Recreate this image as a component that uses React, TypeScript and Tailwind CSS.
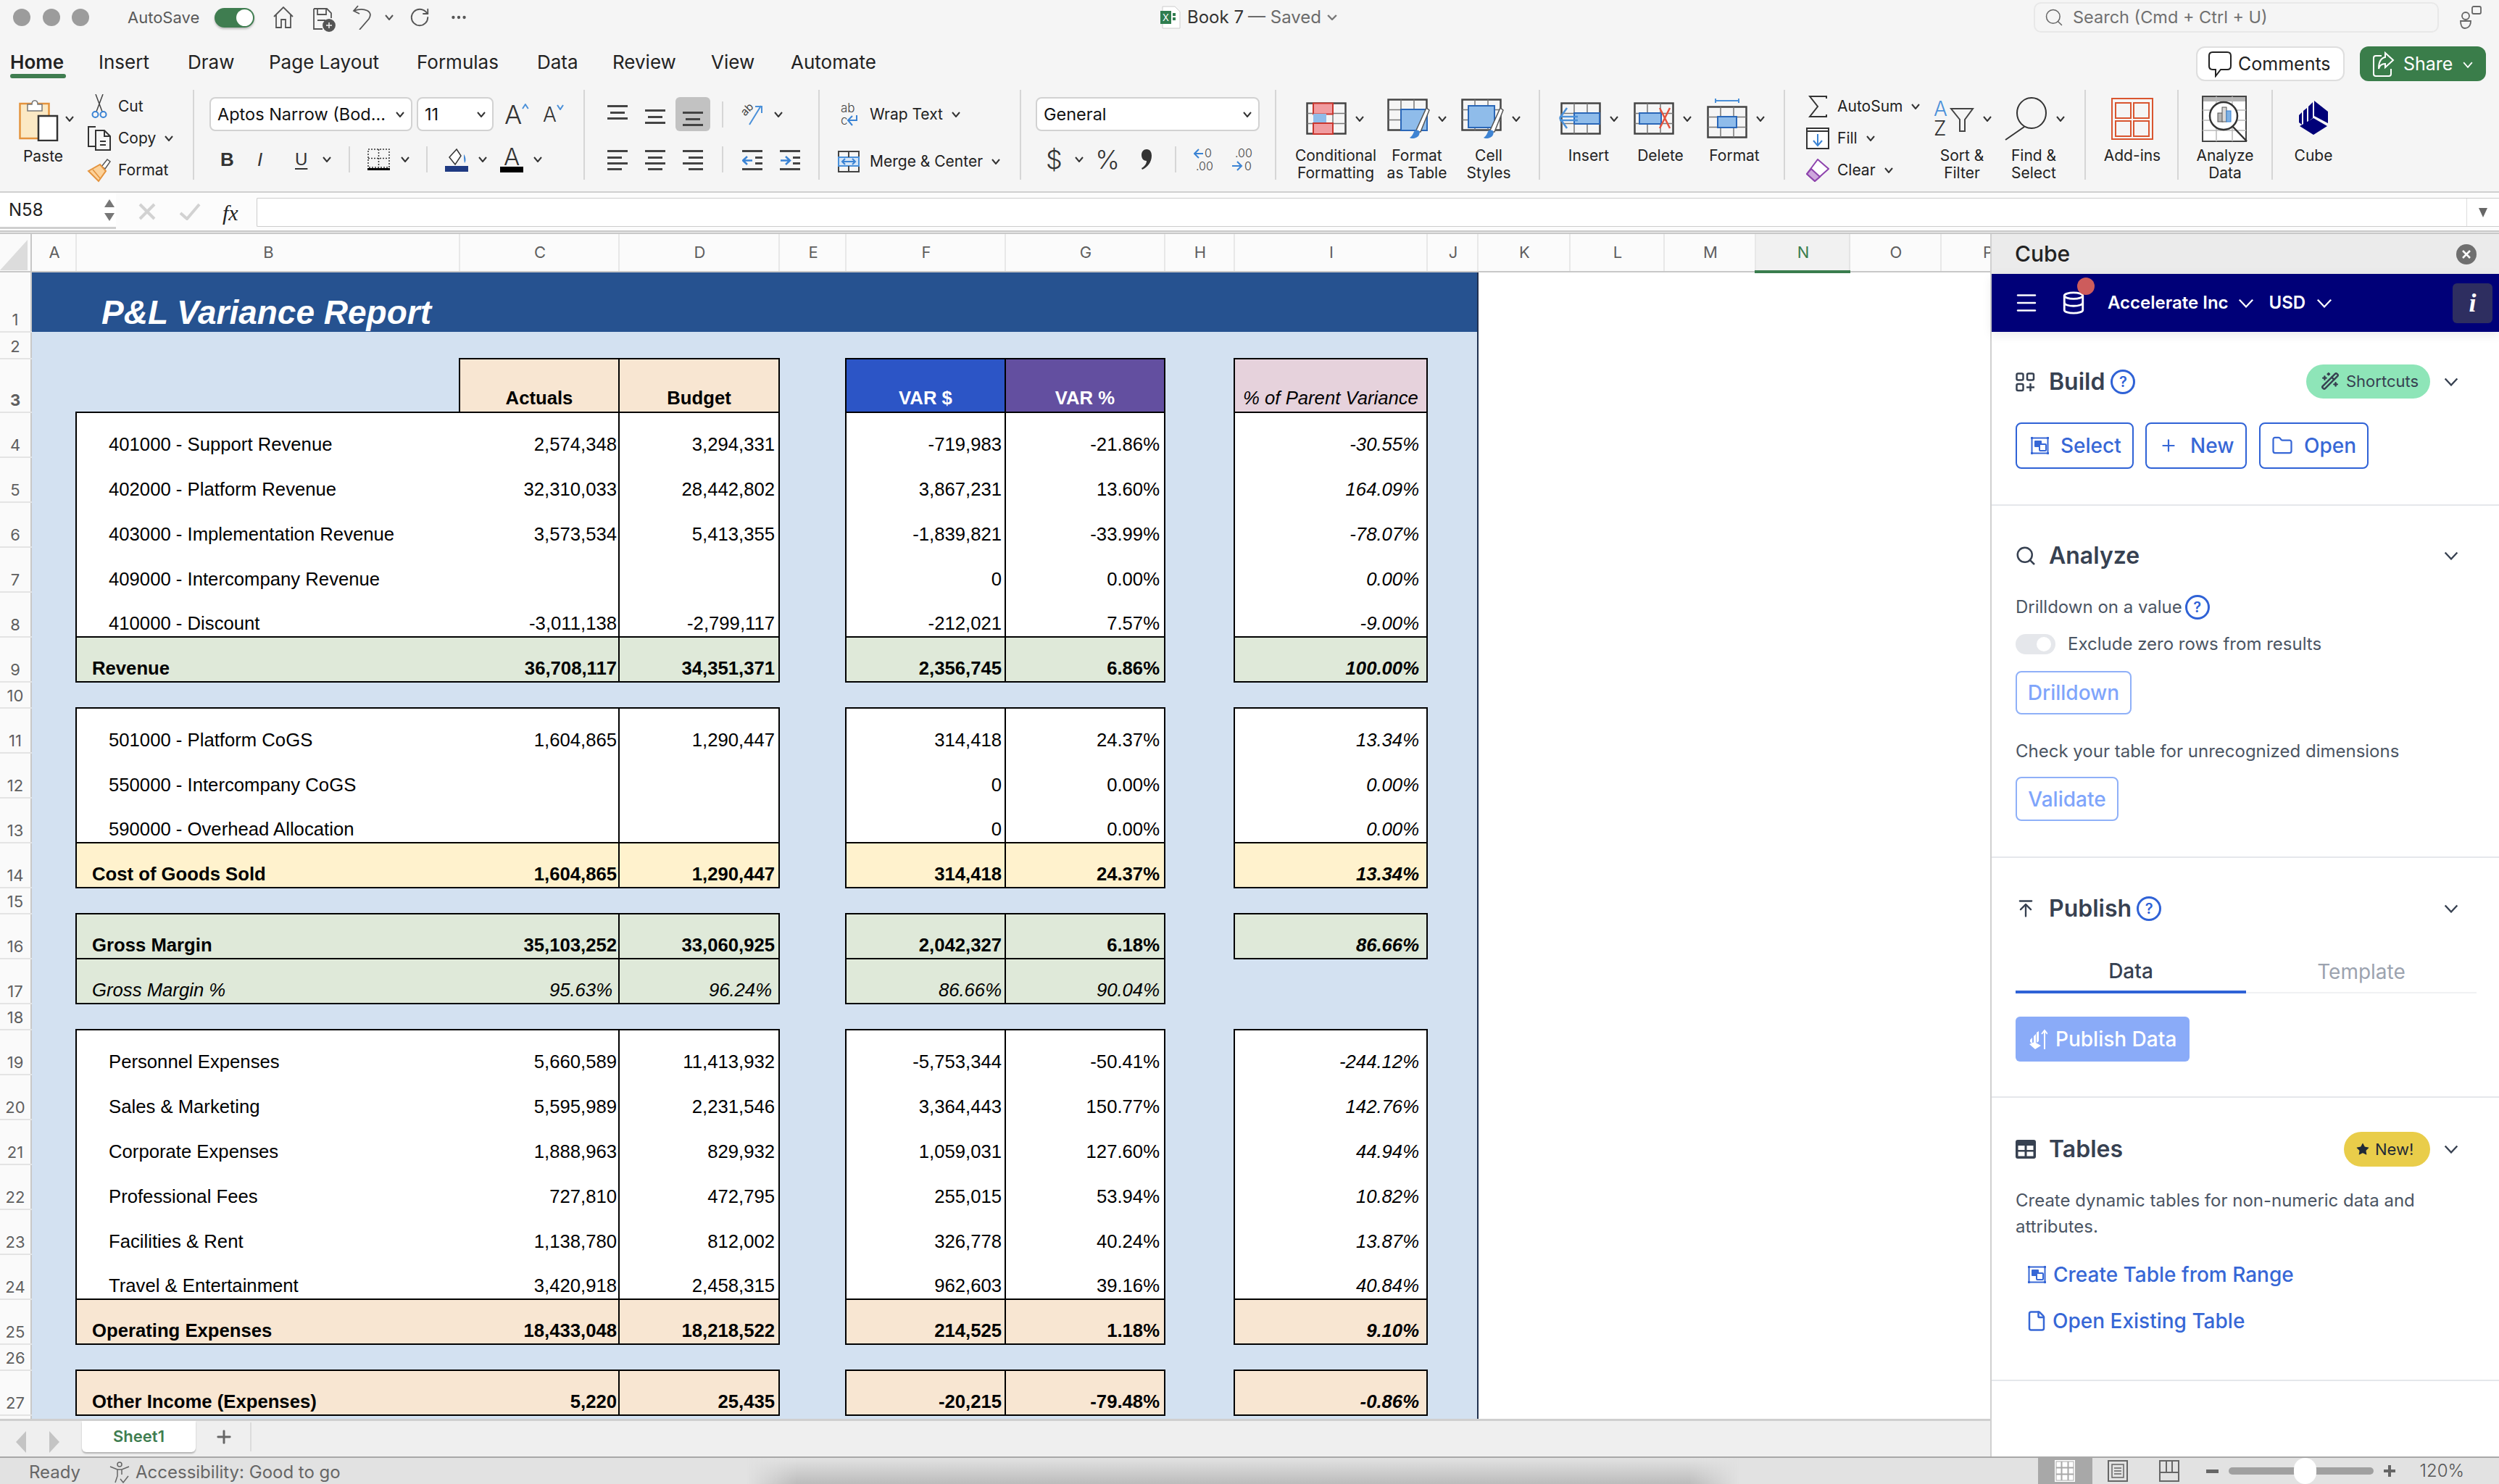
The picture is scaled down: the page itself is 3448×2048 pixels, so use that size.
import React from "react";
import { Search, Plus, Folder, File, ArrowUpToLine, Database, Menu, WandSparkles, Star, RotateCw, MoreHorizontal } from "lucide-react";

const Chev = ({ w = 12, h = 8, c = "#333", sw = 2, cls = "" }: { w?: number; h?: number; c?: string; sw?: number; cls?: string }) => (
  <svg width={w} height={h} viewBox="0 0 12 8" preserveAspectRatio="none" className={`shrink-0 ${cls}`}>
    <path d="M1 1l5 6 5-6" fill="none" stroke={c} strokeWidth={sw} />
  </svg>
);

const Lines = ({ w = 28, h = 36, rows }: { w?: number; h?: number; rows: [number, number, number, string?][] }) => (
  <svg width={w} height={h} viewBox={`0 0 ${w} ${h}`} className="shrink-0">
    {rows.map(([x, y, l, c], i) => (
      <rect key={i} x={x} y={y} width={l} height={3} fill={c || "#444"} />
    ))}
  </svg>
);

const Sep = ({ cls = "" }: { cls?: string }) => <div className={`w-[2px] h-[36px] bg-[#d6d6d6] shrink-0 ${cls}`} />;

const SelectBox = ({ w, label, cls = "" }: { w: string; label: string; cls?: string }) => (
  <div className={`h-[47px] ${w} ${cls} shrink-0 bg-white border-2 border-[#d2d2d2] rounded-[8px] flex items-center pl-[9px] pr-[9px] justify-between text-[23.5px] text-[#111]`}>
    <span className="whitespace-nowrap">{label}</span>
    <Chev />
  </div>
);

const GridBase = ({ children }: { children?: React.ReactNode }) => (
  <svg width="56" height="46" viewBox="0 0 56 46" className="shrink-0 overflow-visible">
    {children}
  </svg>
);
const gridLines = (
  <g fill="none" stroke="#444" strokeWidth="2.5">
    <rect x="1.5" y="1.5" width="53" height="42" />
    <path d="M19 1.5V43.5M37 1.5V43.5M1.5 15.5H54.5M1.5 29.5H54.5" strokeWidth="1.5" stroke="#777" />
  </g>
);
const Brush = () => (
  <g>
    <path d="M58 16 L46 46 L39 46 L54 13Z" fill="#fff" stroke="#555" strokeWidth="1.5" />
    <path d="M38 44 C44 42 46 46 44 50 C42 55 34 56 31 54 C35 52 36 47 38 44Z" fill="#3f84d3" />
  </g>
);

const IconCond = () => (
  <GridBase>
    {gridLines}
    <rect x="10" y="1.5" width="27" height="15" fill="#f19ca0" stroke="#c9362e" strokeWidth="2" />
    <rect x="10" y="16" width="18" height="14" fill="#8fbcea" />
    <rect x="10" y="29" width="27" height="15" fill="#f19ca0" stroke="#c9362e" strokeWidth="2" />
  </GridBase>
);
const IconFmtTable = () => (
  <svg width="62" height="56" viewBox="0 0 62 56" className="shrink-0 overflow-visible">
    {gridLines}
    <rect x="19" y="15" width="36" height="29" fill="#8fbcea" stroke="#2a67b8" strokeWidth="2" />
    <Brush />
  </svg>
);
const IconCellStyles = () => (
  <svg width="62" height="56" viewBox="0 0 62 56" className="shrink-0 overflow-visible">
    {gridLines}
    <rect x="10" y="10" width="36" height="30" fill="#8fbcea" stroke="#2a67b8" strokeWidth="2" />
    <Brush />
  </svg>
);
const IconInsert = () => (
  <GridBase>
    {gridLines}
    <rect x="19" y="15" width="35" height="15" fill="#8fbcea" stroke="#2a67b8" strokeWidth="2" />
    <path d="M-1 22 L9 8 M-1 22 L9 36 M-1 20H24 M-1 25H24" stroke="#4a90d9" strokeWidth="2.5" fill="none" />
  </GridBase>
);
const IconDelete = () => (
  <GridBase>
    {gridLines}
    <rect x="8" y="15" width="30" height="15" fill="#8fbcea" stroke="#2a67b8" strokeWidth="2" />
    <path d="M36 8 L50 36 M50 8 L36 36" stroke="#e4533f" strokeWidth="2.5" />
  </GridBase>
);
const IconFormat = () => (
  <svg width="56" height="56" viewBox="0 -10 56 56" className="shrink-0">
    <path d="M12 -7 H44 M12 -10V-4 M44 -10V-4" stroke="#4a90d9" strokeWidth="2" fill="none" />
    {gridLines}
    <rect x="15" y="15" width="26" height="15" fill="#8fbcea" stroke="#2a67b8" strokeWidth="2" />
  </svg>
);

const Tall = ({ ml = "", w, pl, icon, chev = true, chevMl = "ml-[12px]", lines }: { ml?: string; w: string; pl: string; icon: React.ReactNode; chev?: boolean; chevMl?: string; lines: string[] }) => (
  <div className={`${w} ${ml} shrink-0 flex flex-col`}>
    <div className={`h-[79px] shrink-0 flex items-center ${pl}`}>
      {icon}
      {chev && <Chev cls={chevMl} />}
    </div>
    <div className="shrink-0 text-center text-[21px] leading-[24px] text-[#222]">
      {lines.map((l) => (
        <div key={l} className="whitespace-nowrap">{l}</div>
      ))}
    </div>
  </div>
);

const SmallRow = ({ icon, iconW, label, chevMl = "ml-[12px]", chev = true }: { icon: React.ReactNode; iconW: string; label: string; chevMl?: string; chev?: boolean }) => (
  <div className="h-[44px] shrink-0 flex items-center text-[21px] text-[#222]">
    <div className={`${iconW} shrink-0 flex justify-center pr-[8px]`}>{icon}</div>
    <span className="whitespace-nowrap">{label}</span>
    {chev && <Chev cls={chevMl} />}
  </div>
);

function Ribbon() {
  const group = "h-[124px] border-r-2 border-[#d6d6d6] shrink-0";
  return (
    <div className="h-[154px] pt-[12px] flex border-b-[2px] border-[#d0d0d0] shrink-0">
      {/* Clipboard */}
      <div className={`${group} w-[268px] flex`}>
        <div className="ml-[26px] w-[62px] flex flex-col">
          <svg width="56" height="60" viewBox="0 0 56 60" className="mt-[11px] shrink-0">
            <rect x="1.5" y="8" width="40" height="48" fill="#fbe9c4" stroke="#e4933d" strokeWidth="2.5" />
            <path d="M12 18 V9 H18 C18 2 26 2 26 9 H32 V18Z" fill="#fff" stroke="#777" strokeWidth="1.5" />
            <rect x="27" y="25" width="26" height="34" fill="#fff" stroke="#333" strokeWidth="2.5" />
          </svg>
          <div className="mt-[9px] text-[21px] leading-[24px] text-center text-[#222] pl-[5px]">Paste</div>
        </div>
        <Chev cls="mt-[36px] ml-[2px]" />
        <div className="ml-[16px] pt-[1px] flex flex-col">
          <SmallRow iconW="w-[45px]" chev={false} label="Cut" icon={
            <svg width="22" height="34" viewBox="0 0 22 34">
              <path d="M6 0 L15 24 M16 0 L7 24" stroke="#444" strokeWidth="1.5" fill="none" />
              <circle cx="5.5" cy="28" r="4" fill="none" stroke="#3a83d4" strokeWidth="2" />
              <circle cx="16.5" cy="28" r="4" fill="none" stroke="#3a83d4" strokeWidth="2" />
            </svg>} />
          <SmallRow iconW="w-[45px]" label="Copy" chevMl="ml-[12px]" icon={
            <svg width="34" height="34" viewBox="0 0 34 34" fill="none" stroke="#333" strokeWidth="2">
              <path d="M12 28 H2 V1 H12" />
              <path d="M12 6 H24 L32 14 V33 H12Z" />
              <path d="M24 6 V14 H32 M18 21 H26 M18 26 H26" />
            </svg>} />
          <SmallRow iconW="w-[45px]" chev={false} label="Format" icon={
            <svg width="34" height="34" viewBox="0 0 34 34">
              <path d="M20 12 L28 2 L32 5 L25 15Z" fill="#fff" stroke="#555" strokeWidth="1.5" />
              <path d="M2 18 L18 9 L26 18 L16 32Z" fill="#fcd29a" stroke="#e4933d" strokeWidth="2" />
              <path d="M8 16 L18 28" stroke="#e4933d" strokeWidth="1.5" />
            </svg>} />
        </div>
      </div>

      {/* Font */}
      <div className={`${group} w-[539px] flex flex-col`}>
        <div className="mt-[10px] h-[47px] shrink-0 flex items-center">
          <SelectBox w="w-[280px]" cls="ml-[21px]" label="Aptos Narrow (Bod..." />
          <SelectBox w="w-[106px]" cls="ml-[6px]" label="11" />
          <div className="ml-[15px] w-[34px] flex items-start text-[#333]">
            <span className="text-[36px] leading-[40px] font-light">A</span>
            <svg width="10" height="8" viewBox="0 0 10 8" className="mt-[5px]"><path d="M1 7 L5 1 L9 7" stroke="#4a90d9" strokeWidth="2" fill="none" /></svg>
          </div>
          <div className="ml-[19px] w-[30px] flex items-start text-[#333]">
            <span className="text-[28px] leading-[40px] font-light">A</span>
            <svg width="10" height="8" viewBox="0 0 10 8" className="mt-[6px]"><path d="M1 1 L5 7 L9 1" stroke="#4a90d9" strokeWidth="2" fill="none" /></svg>
          </div>
        </div>
        <div className="mt-[15px] h-[48px] shrink-0 flex items-center text-[#333]">
          <span className="ml-[36px] w-[17px] font-bold text-[26px] font-['Liberation_Sans',sans-serif]">B</span>
          <span className="ml-[34px] w-[12px] italic text-[26px] font-['Liberation_Sans',sans-serif]">I</span>
          <span className="ml-[40px] w-[18px] underline underline-offset-[4px] text-[24px] font-['Liberation_Sans',sans-serif]">U</span>
          <Chev cls="ml-[20px]" />
          <Sep cls="ml-[24px]" />
          <svg width="31" height="30" viewBox="0 0 31 30" className="ml-[24px]">
            <rect x="1" y="1" width="29" height="25" fill="none" stroke="#333" strokeWidth="1.5" strokeDasharray="2 2" />
            <path d="M15.5 1V26M1 13.5H30" stroke="#333" strokeWidth="1.5" strokeDasharray="2 2" />
            <rect x="0" y="27" width="31" height="3" fill="#000" />
          </svg>
          <Chev cls="ml-[15px]" />
          <Sep cls="ml-[23px]" />
          <svg width="32" height="34" viewBox="0 0 32 34" className="ml-[24px]">
            <path d="M6 14 L16 3 L22 12 L14 24Z" fill="#fff" stroke="#333" strokeWidth="1.5" />
            <path d="M26 10 C29 14 29 20 27 22 C26 18 26 14 26 10Z" fill="#3a83d4" />
            <rect x="0" y="26" width="32" height="8" fill="#1f3a82" />
          </svg>
          <Chev cls="ml-[14px]" />
          <div className="ml-[18px] w-[32px] flex flex-col items-center text-[#333]">
            <span className="text-[33px] leading-[27px] font-light">A</span>
            <div className="w-[32px] h-[8px] bg-black" />
          </div>
          <Chev cls="ml-[14px]" />
        </div>
      </div>

      {/* Alignment */}
      <div className={`${group} w-[324px] flex flex-col`}>
        <div className="mt-[10px] h-[47px] shrink-0 flex items-center">
          <div className="ml-[31px]"><Lines rows={[[0, 5, 28], [4, 14, 20], [0, 22, 28]]} /></div>
          <div className="ml-[24px]"><Lines rows={[[0, 11, 28], [4, 20, 20], [0, 28, 28]]} /></div>
          <div className="ml-[14px] w-[48px] h-[47px] bg-[#c2c2c2] rounded-[6px] flex items-center justify-center">
            <Lines rows={[[0, 14, 28], [4, 23, 20], [0, 31, 28]]} />
          </div>
          <Sep cls="ml-[16px]" />
          <div className="ml-[24px] w-[33px] h-[32px] relative">
            <span className="absolute left-[0px] top-[0px] text-[15px] leading-[18px] text-[#444] -rotate-45">ab</span>
            <svg width="33" height="32" viewBox="0 0 33 32" className="absolute inset-0">
              <path d="M12 30 L28 4 M20 5 H29 V14" stroke="#4a90d9" strokeWidth="2" fill="none" />
            </svg>
          </div>
          <Chev cls="ml-[13px]" />
        </div>
        <div className="mt-[15px] h-[48px] shrink-0 flex items-center">
          <div className="ml-[31px]"><Lines rows={[[0, 6, 28], [0, 15, 20], [0, 23, 28], [0, 31, 20]]} h={38} /></div>
          <div className="ml-[24px]"><Lines rows={[[0, 6, 28], [4, 15, 20], [0, 23, 28], [4, 31, 20]]} h={38} /></div>
          <div className="ml-[24px]"><Lines rows={[[0, 6, 28], [8, 15, 20], [0, 23, 28], [8, 31, 20]]} h={38} /></div>
          <Sep cls="ml-[26px]" />
          <svg width="28" height="38" viewBox="0 0 28 38" className="ml-[26px]">
            <path d="M0 7.5H28M18 16.5H28M18 24.5H28M0 32.5H28" stroke="#444" strokeWidth="3" />
            <path d="M14 20.5H2M7 15L1 20.5L7 26" stroke="#3a83d4" strokeWidth="2.5" fill="none" />
          </svg>
          <svg width="28" height="38" viewBox="0 0 28 38" className="ml-[24px]">
            <path d="M0 7.5H28M18 16.5H28M18 24.5H28M0 32.5H28" stroke="#444" strokeWidth="3" />
            <path d="M1 20.5H13M8 15L14 20.5L8 26" stroke="#3a83d4" strokeWidth="2.5" fill="none" />
          </svg>
        </div>
      </div>

      {/* Wrap */}
      <div className={`${group} w-[278px] flex flex-col text-[21px] text-[#222]`}>
        <div className="mt-[10px] h-[48px] shrink-0 flex items-center ml-[25px]">
          <div className="w-[44px] shrink-0">
            <div className="w-[30px] h-[34px] relative text-[#444] font-light text-[17px] leading-[17px]">
              <span className="absolute left-[4px] top-0">ab</span>
              <span className="absolute left-[4px] top-[17px]">c</span>
              <svg width="30" height="34" viewBox="0 0 30 34" className="absolute inset-0">
                <path d="M26 18 V25 H15 M20 19 L14 25 L20 32" stroke="#3a83d4" strokeWidth="2" fill="none" />
              </svg>
            </div>
          </div>
          <span className="whitespace-nowrap">Wrap Text</span>
          <Chev cls="ml-[12px]" />
        </div>
        <div className="mt-[16px] h-[50px] shrink-0 flex items-center ml-[25px]">
          <div className="w-[44px] shrink-0">
            <svg width="30" height="30" viewBox="0 0 30 30">
              <rect x="1" y="1" width="28" height="28" fill="none" stroke="#444" strokeWidth="2" />
              <rect x="1" y="9" width="28" height="12" fill="#d4e5f7" stroke="#4a90d9" strokeWidth="2" />
              <path d="M15 1V9M15 21V29" stroke="#444" strokeWidth="2" />
              <path d="M6 15H24M10 11L6 15L10 19M20 11L24 15L20 19" stroke="#3a83d4" strokeWidth="2" fill="none" />
            </svg>
          </div>
          <span className="whitespace-nowrap">Merge &amp; Center</span>
          <Chev cls="ml-[12px]" />
        </div>
      </div>

      {/* Number */}
      <div className={`${group} w-[352px] flex flex-col`}>
        <div className="mt-[10px] h-[47px] shrink-0 flex items-center">
          <SelectBox w="w-[309px]" cls="ml-[20px]" label="General" />
        </div>
        <div className="mt-[15px] h-[48px] shrink-0 flex items-center text-[#333]">
          <span className="ml-[34px] w-[17px] text-[36px] font-light leading-none">$</span>
          <Chev cls="ml-[23px]" />
          <span className="ml-[14px] w-[38px] text-[36px] font-light leading-none text-center">%</span>
          <svg width="16" height="30" viewBox="0 0 16 30" className="ml-[27px] shrink-0">
            <path d="M8 1 C13 1 15 5 15 10 C15 19 9 26 2 29 L1 27 C5 25 8 21 8 17 C4 17 1 14 1 9 C1 4 4 1 8 1Z" fill="#333" />
          </svg>
          <Sep cls="ml-[31px]" />
          <div className="ml-[24px] w-[31px] h-[36px] relative text-[16px] leading-[18px] font-light text-[#444]">
            <span className="absolute left-[15px] top-0">0</span>
            <span className="absolute left-[3px] top-[18px]">.00</span>
            <svg width="31" height="18" viewBox="0 0 31 18" className="absolute left-0 top-0">
              <path d="M13 10 H2 M7 4 L1 10 L7 16" stroke="#3a83d4" strokeWidth="2" fill="none" />
            </svg>
          </div>
          <div className="ml-[22px] w-[30px] h-[36px] relative text-[16px] leading-[18px] font-light text-[#444]">
            <span className="absolute left-[4px] top-0">.00</span>
            <span className="absolute left-[17px] top-[18px]">0</span>
            <svg width="16" height="18" viewBox="0 0 16 18" className="absolute left-0 top-[18px]">
              <path d="M0 9 H12 M7 3 L13 9 L7 15" stroke="#3a83d4" strokeWidth="2" fill="none" />
            </svg>
          </div>
        </div>
      </div>

      {/* Styles */}
      <div className={`${group} w-[364px] flex`}>
        <Tall ml="ml-[22px]" w="w-[120px]" pl="pl-[19px]" icon={<IconCond />} lines={["Conditional", "Formatting"]} />
        <Tall w="w-[104px]" pl="pl-[11px]" chevMl="ml-[8px]" icon={<IconFmtTable />} lines={["Format", "as Table"]} />
        <Tall w="w-[94px]" pl="pl-[9px]" chevMl="ml-[8px]" icon={<IconCellStyles />} lines={["Cell", "Styles"]} />
      </div>

      {/* Cells */}
      <div className={`${group} w-[338px] flex`}>
        <Tall ml="ml-[15px]" w="w-[104px]" pl="pl-[13px]" icon={<IconInsert />} lines={["Insert"]} />
        <Tall w="w-[94px]" pl="pl-[10px]" icon={<IconDelete />} lines={["Delete"]} />
        <Tall w="w-[110px]" pl="pl-[17px]" icon={<IconFormat />} lines={["Format"]} />
      </div>

      {/* Editing */}
      <div className={`${group} w-[415px] flex`}>
        <div className="ml-[25px] w-[162px] shrink-0 pt-[1px] flex flex-col">
          <SmallRow iconW="w-[47px]" label="AutoSum" chevMl="ml-[12px]" icon={
            <svg width="26" height="30" viewBox="0 0 26 30"><path d="M25 4 V1 H2 L13 15 L2 29 H25 V26" fill="none" stroke="#333" strokeWidth="2" /></svg>} />
          <SmallRow iconW="w-[47px]" label="Fill" icon={
            <svg width="32" height="30" viewBox="0 0 32 30"><rect x="1" y="1" width="30" height="28" fill="#fff" stroke="#333" strokeWidth="2" /><path d="M1 5H31" stroke="#333" strokeWidth="2" /><path d="M16 9V24M10 18L16 25L22 18" stroke="#3a83d4" strokeWidth="2" fill="none" /></svg>} />
          <SmallRow iconW="w-[47px]" label="Clear" icon={
            <svg width="32" height="32" viewBox="0 0 32 32"><path d="M16 1 L31 14 L12 31 L1 21Z" fill="#fff" stroke="#8e44ad" strokeWidth="2" /><path d="M7 14 L19 25 L12 31 L1 21Z" fill="#cda6dc" stroke="#8e44ad" strokeWidth="2" /></svg>} />
        </div>
        <Tall w="w-[114px]" pl="pl-[18px]" chevMl="ml-[12px]" icon={
          <div className="w-[56px] h-[54px] relative shrink-0 font-light text-[28px] leading-[27px]">
            <span className="absolute left-0 top-0 text-[#4a90d9]">A</span>
            <span className="absolute left-0 top-[27px] text-[#333]">Z</span>
            <svg width="56" height="54" viewBox="0 0 56 54" className="absolute inset-0">
              <path d="M24 13 H54 L43 28 V44 H36 V28Z" fill="none" stroke="#444" strokeWidth="2" />
            </svg>
          </div>} lines={["Sort &", "Filter"]} />
        <Tall w="w-[84px]" pl="pl-[2px]" chevMl="ml-[13px]" icon={
          <svg width="58" height="60" viewBox="0 0 58 60" className="shrink-0">
            <ellipse cx="37" cy="22" rx="20" ry="21" fill="none" stroke="#333" strokeWidth="2" />
            <path d="M27 41 L1 59" stroke="#333" strokeWidth="2" />
          </svg>} lines={["Find &", "Select"]} />
      </div>

      {/* Add-ins */}
      <div className={`${group} w-[128px]`}>
        <Tall w="w-[128px]" pl="justify-center" chev={false} icon={
          <svg width="58" height="58" viewBox="0 0 58 58">
            <rect x="1" y="1" width="56" height="56" fill="none" stroke="#d9552f" strokeWidth="2" />
            <rect x="6" y="7" width="21" height="21" fill="none" stroke="#d9552f" strokeWidth="2" />
            <rect x="31" y="7" width="21" height="21" fill="none" stroke="#d9552f" strokeWidth="2" />
            <rect x="6" y="32" width="21" height="21" fill="none" stroke="#d9552f" strokeWidth="2" />
            <rect x="31" y="32" width="21" height="21" fill="none" stroke="#d9552f" strokeWidth="2" />
          </svg>} lines={["Add-ins"]} />
      </div>
      <div className={`${group} w-[130px]`}>
        <Tall w="w-[128px]" pl="justify-center" chev={false} icon={
          <svg width="64" height="64" viewBox="0 0 64 64">
            <rect x="1" y="1" width="60" height="62" fill="#fff" stroke="#444" strokeWidth="2" />
            <rect x="2" y="2" width="58" height="6" fill="#b5b5b5" />
            <path d="M1 20H61M1 34H61M1 48H61M20 1V63M42 1V63" stroke="#bbb" strokeWidth="1.5" />
            <circle cx="30" cy="28" r="19" fill="#fff" stroke="#333" strokeWidth="2.5" />
            <rect x="22" y="24" width="7" height="12" fill="#b5b5b5" stroke="#555" />
            <rect x="28" y="16" width="6" height="20" fill="#d8d8d8" stroke="#555" />
            <rect x="34" y="21" width="6" height="15" fill="#7fb2e5" stroke="#3a83d4" />
            <path d="M42 42 L62 63" stroke="#333" strokeWidth="2.5" />
          </svg>} lines={["Analyze", "Data"]} />
      </div>
      <div className="w-[112px] h-[124px]">
        <Tall w="w-[112px]" pl="justify-center" chev={false} icon={
          <svg width="42" height="47" viewBox="0 0 42 47" className="mt-[-2px]">
            <path d="M1 20 L5 16 V33 L1 30Z M7 14 L12 10 V30 L7 33Z M14 8 L20 2 V24 L14 28Z M22 0 L41 15 V31 L22 21Z M21 24 L40 35 L21 47 L2 35Z" fill="#000078" />
          </svg>} lines={["Cube"]} />
      </div>
    </div>
  );
}

function TitleBar() {
  return (
    <div className="h-[62px] pb-[14px] flex items-center shrink-0">
      <div className="w-[1601px] shrink-0 flex items-center text-[#555]">
        <div className="ml-[18px] w-[24px] h-[24px] rounded-full bg-[#9c9c9c]" />
        <div className="ml-[17px] w-[24px] h-[24px] rounded-full bg-[#9c9c9c]" />
        <div className="ml-[16px] w-[24px] h-[24px] rounded-full bg-[#9c9c9c]" />
        <span className="ml-[53px] w-[120px] text-[22px] text-[#5a5a5a]">AutoSave</span>
        <div className="w-[55px] h-[27px] rounded-full bg-[#3f7d50] flex justify-end items-center pr-[2px] shadow-[0_2px_3px_rgba(0,0,0,0.25)]">
          <div className="w-[23px] h-[23px] rounded-full bg-white" />
        </div>
        <svg width="30" height="30" viewBox="0 0 30 30" className="ml-[25px]" fill="none" stroke="#555" strokeWidth="1.8">
          <path d="M2 14 L15 1 L28 14 M5 11 V29 H12 V18 H18 V29 H25 V11" />
        </svg>
        <svg width="33" height="33" viewBox="0 0 33 33" className="ml-[25px] mt-[6px]" fill="none" stroke="#555" strokeWidth="1.8">
          <path d="M2 1 H20 L26 7 V14 M14 29 H2 V1 M7 1 V9 H19 V1 M7 17 H18" />
          <circle cx="23" cy="24" r="8" fill="#555" />
          <path d="M19 24 H27 M23 20 V28" stroke="#f5f5f5" strokeWidth="1.5" />
        </svg>
        <svg width="28" height="34" viewBox="0 0 28 34" className="ml-[22px]" fill="none" stroke="#555" strokeWidth="1.8">
          <path d="M8 1 L2 8 L10 12 M2 8 C16 3 30 8 23 19 L10 34" />
        </svg>
        <Chev cls="ml-[17px]" c="#555" />
        <RotateCw className="ml-[21px] w-[30px] h-[30px]" strokeWidth={1.5} color="#555" />
        <MoreHorizontal className="ml-[26px] w-[26px] h-[26px]" strokeWidth={2} color="#555" />
      </div>
      <div className="w-[1205px] shrink-0 flex items-center text-[24px]">
        <div className="w-[28px] h-[32px] relative shrink-0">
          <svg width="28" height="32" viewBox="0 0 28 32" className="absolute inset-0">
            <path d="M3 1 H20 L27 8 V31 H3Z" fill="#fff" stroke="#ccc" />
            <rect x="0" y="7" width="15" height="18" fill="#2f7d4f" />
            <path d="M17 10h4v4h-4zM17 16h4v4h-4z" fill="#2f7d4f" />
          </svg>
          <span className="absolute left-[3px] top-[8px] text-[13px] leading-[16px] text-white">X</span>
        </div>
        <span className="ml-[9px] text-[#333]">Book 7</span>
        <span className="ml-[6px] text-[#6b6b6b]">— Saved</span>
        <Chev cls="ml-[8px]" c="#777" w={14} />
      </div>
      <div className="w-[559px] h-[42px] shrink-0 border-2 border-[#e8e8e8] rounded-[10px] flex items-center pl-[12px] text-[#707070] text-[23.5px]">
        <Search className="w-[28px] h-[28px]" strokeWidth={1.3} color="#666" />
        <span className="ml-[12px]">Search (Cmd + Ctrl + U)</span>
      </div>
      <svg width="32" height="32" viewBox="0 0 32 32" className="ml-[28px]" fill="none" stroke="#666" strokeWidth="1.8">
        <rect x="18" y="1" width="12" height="10" rx="2" />
        <circle cx="9" cy="14" r="5" />
        <path d="M2 21 H16 C16 30 10 31 8 31 C4 31 2 27 2 21Z" />
      </svg>
    </div>
  );
}

function TabsRow() {
  const tab = "shrink-0 whitespace-nowrap text-[#222] mb-[3px]";
  return (
    <div className="h-[50px] flex items-center pl-[14px] text-[26px] shrink-0">
      <div className={`${tab} w-[122px] font-semibold relative`}>
        Home
        <div className="absolute left-0 top-[36px] w-[77px] h-[6px] rounded-full bg-[#3f7d50]" />
      </div>
      <div className={`${tab} w-[123px]`}>Insert</div>
      <div className={`${tab} w-[112px]`}>Draw</div>
      <div className={`${tab} w-[204px]`}>Page Layout</div>
      <div className={`${tab} w-[166px]`}>Formulas</div>
      <div className={`${tab} w-[104px]`}>Data</div>
      <div className={`${tab} w-[136px]`}>Review</div>
      <div className={`${tab} w-[110px]`}>View</div>
      <div className={tab}>Automate</div>
      <div className="ml-auto h-[48px] mt-[2px] pt-[2px] w-[205px] bg-white border-2 border-[#dedede] rounded-[12px] flex items-center pl-[15px] gap-[9px] text-[25px] text-[#222]">
        <svg width="32" height="36" viewBox="0 0 32 36" fill="none" stroke="#222" strokeWidth="2">
          <path d="M6 1 H26 C29 1 31 3 31 6 V20 C31 23 29 25 26 25 H17 L10 34 V25 H6 C3 25 1 23 1 20 V6 C1 3 3 1 6 1Z" />
        </svg>
        Comments
      </div>
      <div className="ml-[21px] mr-[18px] h-[48px] mt-[2px] pt-[2px] w-[174px] bg-[#3a7d4a] rounded-[12px] flex items-center pl-[18px] text-[25px] text-white">
        <svg width="30" height="36" viewBox="0 0 30 36" fill="none" stroke="#fff" strokeWidth="2" className="shrink-0">
          <path d="M12 6 H4 C2 6 1 7 1 9 V31 C1 33 2 34 4 34 H22 C24 34 25 33 25 31 V24" />
          <path d="M17 2 L28 12 L17 22 V17 C12 17 9 20 8 24 C8 15 11 9 17 8Z" />
        </svg>
        <span className="ml-[12px]">Share</span>
        <Chev cls="ml-[14px]" c="#fff" w={14} h={9} sw={1.5} />
      </div>
    </div>
  );
}

function FormulaBar() {
  return (
    <div className="h-[52px] flex bg-[#fcfcfc] shrink-0 relative">
      <div className="w-[160px] h-[50px] bg-white border-b-[3px] border-[#cfcfcf] flex items-center pl-[12px] pr-[2px] justify-between text-[24px] text-[#222]">
        N58
        <div className="flex flex-col gap-[8px]">
          <div className="w-0 h-0 border-x-[7px] border-x-transparent border-b-[11px] border-b-[#777]" />
          <div className="w-0 h-0 border-x-[7px] border-x-transparent border-t-[11px] border-t-[#777]" />
        </div>
      </div>
      <svg width="26" height="24" viewBox="0 0 26 24" className="ml-[30px] mt-[14px]"><path d="M3 2 L23 22 M23 2 L3 22" stroke="#d2d2d2" strokeWidth="4" /></svg>
      <svg width="30" height="24" viewBox="0 0 30 24" className="ml-[31px] mt-[14px]"><path d="M2 14 L11 22 L28 2" stroke="#d2d2d2" strokeWidth="4" fill="none" /></svg>
      <span className="ml-[30px] w-[34px] text-[30px] italic font-['Liberation_Serif',serif] text-[#222] mt-[5px]">fx</span>
      <div className="ml-[13px] mt-[7px] w-[3094px] h-[40px] bg-white border border-[#ccc] border-r-0 rounded-l-[2px] flex justify-end">
        <div className="w-[45px] h-full border-l border-[#ddd] flex items-center justify-center">
          <div className="w-0 h-0 border-x-[6px] border-x-transparent border-t-[13px] border-t-[#666]" />
        </div>
      </div>
    </div>
  );
}

/* ---------- spreadsheet ---------- */

const BLUE = "bg-[#d3e1f1]";
const COLS = [43, 62, 529, 220, 221, 92, 220, 220, 96, 266, 70, 127, 130, 126, 130, 126, 128];
const LETTERS = "A B C D E F G H I J K L M N O P".split(" ");

const rowHead = "bg-[#fafafa] border-b-2 border-b-[#e4e4e4] border-r-2 border-r-[#c8c8c8] text-center align-bottom text-[22px] text-[#5f5f5f] font-['Inter',sans-serif] pb-[2px] leading-[28px]";
const cell = "align-bottom whitespace-nowrap pb-[3px] leading-[30px] border-black";
const num = `${cell} text-right`;
const hdr = "border-2 border-black align-bottom text-center pb-[4px] leading-[30px]";

type RowP = {
  n: number;
  label?: string;
  vals?: [string, string, string, string, string];
  fill?: string;
  top?: boolean;
  bottom?: boolean;
  bold?: boolean;
  italic?: boolean;
  noI?: boolean;
};

function DataRow({ n, label, vals = ["", "", "", "", ""], fill = "bg-white", top, bottom, bold, italic, noI }: RowP) {
  const tb = `${top ? "border-t-2" : ""} ${bottom ? "border-b-2" : ""}`;
  const it = italic ? "italic" : "";
  const w = bold ? "font-bold" : "";
  return (
    <tr className="h-[62px]">
      <td className={rowHead}>{n}</td>
      <td className={BLUE} />
      <td className={`${cell} text-left ${bold || italic ? "pl-[21px]" : "pl-[44px]"} border-l-2 ${tb} ${fill} ${w} ${it}`}>{label}</td>
      <td className={`${num} border-r-2 ${italic ? "pr-[8px]" : "pr-[2px]"} ${tb} ${fill} ${w} ${it}`}>{vals[0]}</td>
      <td className={`${num} border-r-2 ${italic ? "pr-[9px]" : "pr-[5px]"} ${tb} ${fill} ${w} ${it}`}>{vals[1]}</td>
      <td className={BLUE} />
      <td className={`${num} border-x-2 pr-[4px] ${tb} ${fill} ${w} ${it}`}>{vals[2]}</td>
      <td className={`${num} border-r-2 pr-[6px] ${tb} ${fill} ${w} ${it}`}>{vals[3]}</td>
      <td className={BLUE} />
      {noI ? (
        <td className={BLUE} />
      ) : (
        <td className={`${num} border-x-2 pr-[10px] italic ${tb} ${fill} ${w}`}>{vals[4]}</td>
      )}
      <td className={`${BLUE} border-r-2 border-r-[#20304f]`} />
      <td colSpan={6} className="bg-white" />
    </tr>
  );
}

function Spacer({ n, h }: { n: number; h: string }) {
  return (
    <tr className={h}>
      <td className={rowHead}>{n}</td>
      <td colSpan={10} className={`${BLUE} border-r-2 border-r-[#20304f]`} />
      <td colSpan={6} className="bg-white" />
    </tr>
  );
}

const GREEN = "bg-[#dfe9d9]";
const YELLOW = "bg-[#fff2cd]";
const PEACH = "bg-[#f8e6d2]";

function Sheet() {
  return (
    <div className="flex-1 overflow-hidden bg-white">
      <table className="border-collapse table-fixed w-[2806px] font-['Liberation_Sans',Arial,sans-serif] text-[25.7px] text-black">
        <colgroup>
          {COLS.map((c, i) => (
            <col key={i} style={{ width: c }} />
          ))}
        </colgroup>
        <tbody>
          <tr className="h-[52px] font-['Inter',sans-serif] text-[22px] text-[#5f5f5f]">
            <td className="bg-[#fafafa] border-b-2 border-b-[#c8c8c8] border-r-2 border-r-[#c8c8c8]">
              <svg width="38" height="44" viewBox="0 0 38 44" className="mt-[4px]"><path d="M38 2 V44 H0Z" fill="#dcdcdc" /></svg>
            </td>
            {LETTERS.map((l) => (
              <td
                key={l}
                className={
                  l === "N"
                    ? "text-center pl-[2px] bg-[#f1f1f1] text-[#3a7d4e] border-b-[4px] border-b-[#3a7d4e] border-r-2 border-r-[#e4e4e4]"
                    : "text-center pl-[2px] bg-[#fbfbfb] border-b-2 border-b-[#c8c8c8] border-r-2 border-r-[#e8e8e8]"
                }
              >
                {l}
              </td>
            ))}
          </tr>
          <tr className="h-[83px]">
            <td className={rowHead}>1</td>
            <td colSpan={10} className="bg-[#265290] border-r-2 border-r-[#20304f] align-bottom pl-[96px] text-[46px] leading-[53px] font-bold italic text-white whitespace-nowrap">
              P&amp;L Variance Report
            </td>
            <td colSpan={6} className="bg-white" />
          </tr>
          <Spacer n={2} h="h-[37px]" />
          <tr className="h-[74px] font-bold">
            <td className={rowHead}>3</td>
            <td colSpan={2} className={BLUE} />
            <td className={`${PEACH} ${hdr}`}>Actuals</td>
            <td className={`${PEACH} ${hdr}`}>Budget</td>
            <td className={BLUE} />
            <td className={`bg-[#2c55c6] text-white ${hdr}`}>VAR $</td>
            <td className={`bg-[#634fa0] text-white ${hdr}`}>VAR %</td>
            <td className={BLUE} />
            <td className={`bg-[#e6d2dc] ${hdr} italic font-normal whitespace-nowrap`}>% of Parent Variance</td>
            <td className={`${BLUE} border-r-2 border-r-[#20304f]`} />
            <td colSpan={6} className="bg-white" />
          </tr>
          <DataRow n={4} top label="401000 - Support Revenue" vals={["2,574,348", "3,294,331", "-719,983", "-21.86%", "-30.55%"]} />
          <DataRow n={5} label="402000 - Platform Revenue" vals={["32,310,033", "28,442,802", "3,867,231", "13.60%", "164.09%"]} />
          <DataRow n={6} label="403000 - Implementation Revenue" vals={["3,573,534", "5,413,355", "-1,839,821", "-33.99%", "-78.07%"]} />
          <DataRow n={7} label="409000 - Intercompany Revenue" vals={["", "", "0", "0.00%", "0.00%"]} />
          <DataRow n={8} label="410000 - Discount" vals={["-3,011,138", "-2,799,117", "-212,021", "7.57%", "-9.00%"]} />
          <DataRow n={9} top bottom bold fill={GREEN} label="Revenue" vals={["36,708,117", "34,351,371", "2,356,745", "6.86%", "100.00%"]} />
          <Spacer n={10} h="h-[36px]" />
          <DataRow n={11} top label="501000 - Platform CoGS" vals={["1,604,865", "1,290,447", "314,418", "24.37%", "13.34%"]} />
          <DataRow n={12} label="550000 - Intercompany CoGS" vals={["", "", "0", "0.00%", "0.00%"]} />
          <DataRow n={13} label="590000 - Overhead Allocation" vals={["", "", "0", "0.00%", "0.00%"]} />
          <DataRow n={14} top bottom bold fill={YELLOW} label="Cost of Goods Sold" vals={["1,604,865", "1,290,447", "314,418", "24.37%", "13.34%"]} />
          <Spacer n={15} h="h-[36px]" />
          <DataRow n={16} top bottom bold fill={GREEN} label="Gross Margin" vals={["35,103,252", "33,060,925", "2,042,327", "6.18%", "86.66%"]} />
          <DataRow n={17} top bottom italic noI fill={GREEN} label="Gross Margin %" vals={["95.63%", "96.24%", "86.66%", "90.04%", ""]} />
          <Spacer n={18} h="h-[36px]" />
          <DataRow n={19} top label="Personnel Expenses" vals={["5,660,589", "11,413,932", "-5,753,344", "-50.41%", "-244.12%"]} />
          <DataRow n={20} label="Sales & Marketing" vals={["5,595,989", "2,231,546", "3,364,443", "150.77%", "142.76%"]} />
          <DataRow n={21} label="Corporate Expenses" vals={["1,888,963", "829,932", "1,059,031", "127.60%", "44.94%"]} />
          <DataRow n={22} label="Professional Fees" vals={["727,810", "472,795", "255,015", "53.94%", "10.82%"]} />
          <DataRow n={23} label="Facilities & Rent" vals={["1,138,780", "812,002", "326,778", "40.24%", "13.87%"]} />
          <DataRow n={24} label="Travel & Entertainment" vals={["3,420,918", "2,458,315", "962,603", "39.16%", "40.84%"]} />
          <DataRow n={25} top bottom bold fill={PEACH} label="Operating Expenses" vals={["18,433,048", "18,218,522", "214,525", "1.18%", "9.10%"]} />
          <Spacer n={26} h="h-[36px]" />
          <DataRow n={27} top bottom bold fill={PEACH} label="Other Income (Expenses)" vals={["5,220", "25,435", "-20,215", "-79.48%", "-0.86%"]} />
          <Spacer n={28} h="h-[36px]" />
        </tbody>
      </table>
    </div>
  );
}

function TabBar() {
  return (
    <div className="h-[52px] shrink-0 border-t-[3px] border-[#cfcfcf] bg-[#efefef] flex">
      <div className="ml-[22px] mt-[14px] w-0 h-0 border-y-[15px] border-y-transparent border-r-[14px] border-r-[#c4c4c4]" />
      <div className="ml-[32px] mt-[14px] w-0 h-0 border-y-[15px] border-y-transparent border-l-[14px] border-l-[#c4c4c4]" />
      <div className="ml-[31px] w-[157px] h-[43px] bg-white rounded-b-[6px] shadow-[0_2px_2px_rgba(0,0,0,0.25)] flex items-center justify-center text-[22px] font-semibold text-[#3f7d50]">Sheet1</div>
      <Plus className="ml-[25px] mt-[8px] w-[28px] h-[28px]" strokeWidth={2.5} color="#666" />
      <div className="ml-[22px] mt-[2px] w-[2px] h-[40px] bg-[#dcdcdc]" />
    </div>
  );
}

/* ---------- add-in pane ---------- */

const PaneChev = () => <Chev w={20} h={12} c="#374151" sw={1.4} cls="ml-[19px]" />;
const Help = ({ cls = "" }: { cls?: string }) => (
  <div className={`w-[34px] h-[34px] rounded-full border-[3px] border-[#2f62d6] text-[#2f62d6] flex items-center justify-center text-[20px] font-semibold ${cls}`}>?</div>
);
const SelectIcon = ({ c = "#3767d6" }: { c?: string }) => (
  <svg width="25" height="24" viewBox="0 0 25 24" className="shrink-0">
    <rect x="1.5" y="1.5" width="22" height="21" fill="none" stroke={c} strokeWidth="2" />
    <rect x="0" y="0" width="3" height="3" fill={c} /><rect x="22" y="0" width="3" height="3" fill={c} />
    <rect x="0" y="21" width="3" height="3" fill={c} /><rect x="22" y="21" width="3" height="3" fill={c} />
    <rect x="5" y="5" width="10" height="9" rx="1" fill={c} />
    <rect x="12" y="10" width="9" height="9" rx="1" fill="#fff" stroke={c} strokeWidth="2" />
  </svg>
);
const outline = "h-[64px] border-2 border-[#2f62d6] rounded-[8px] flex items-center text-[28px] font-medium text-[#3767d6] shrink-0";
const pale = "border-2 border-[#8fb0f8] rounded-[8px] flex items-center justify-center text-[28px] font-medium text-[#7fa5fb]";
const sect = "pl-[33px] pr-[56px] border-b-2 border-[#e5e7eb] shrink-0";
const head = "h-[48px] flex items-center text-[32px] font-semibold text-[#374151]";

function Pane() {
  return (
    <div className="w-[702px] shrink-0 border-l-2 border-[#d0d0d0] bg-white flex flex-col">
      <div className="h-[55px] shrink-0 bg-[#ebebeb] flex items-center pl-[32px] pr-[31px] justify-between text-[30px] font-medium text-[#222]">
        Cube
        <div className="w-[28px] h-[28px] rounded-full bg-[#6f6f6f] flex items-center justify-center">
          <svg width="14" height="14" viewBox="0 0 14 14"><path d="M2 2 L12 12 M12 2 L2 12" stroke="#fff" strokeWidth="2.5" /></svg>
        </div>
      </div>
      <div className="h-[80px] shrink-0 bg-[#000078] flex items-center pl-[30px] pr-[9px] text-white text-[24px] font-semibold relative shadow-[0_4px_14px_rgba(0,0,0,0.08)]">
        <Menu className="w-[36px] h-[36px]" strokeWidth={1.6} />
        <div className="relative ml-[30px] w-[34px]">
          <Database className="w-[34px] h-[34px]" strokeWidth={2} />
          <div className="absolute -top-[18px] left-[22px] w-[24px] h-[24px] rounded-full bg-[#cd5c5c]" />
        </div>
        <span className="ml-[30px] whitespace-nowrap">Accelerate Inc</span>
        <Chev w={22} h={13} c="#fff" sw={1.3} cls="ml-[13px]" />
        <span className="ml-[21px]">USD</span>
        <Chev w={22} h={13} c="#fff" sw={1.3} cls="ml-[15px]" />
        <div className="ml-auto w-[55px] h-[55px] rounded-[6px] bg-[#2e2e60] flex items-center justify-center text-[36px] font-bold italic font-['Liberation_Serif',serif]">i</div>
      </div>

      {/* Build */}
      <div className={`${sect} pt-[45px] pb-[49px]`}>
        <div className={head}>
          <svg width="27" height="27" viewBox="0 0 27 27" className="shrink-0" fill="none" stroke="#374151" strokeWidth="2.5">
            <rect x="1.5" y="1.5" width="9" height="9" rx="2" /><rect x="16" y="1.5" width="9" height="9" rx="2" /><rect x="1.5" y="16" width="9" height="9" rx="2" />
            <path d="M20.5 15V26M15 20.5H26" />
          </svg>
          <span className="ml-[19px]">Build</span>
          <Help cls="ml-[8px]" />
          <div className="ml-auto -translate-y-px w-[171px] h-[47px] rounded-full bg-[#8ee5b8] flex items-center pl-[20px] gap-[9px] text-[22px] font-normal text-[#374151]">
            <WandSparkles className="w-[26px] h-[26px]" strokeWidth={2.2} />
            Shortcuts
          </div>
          <PaneChev />
        </div>
        <div className="mt-[32px] flex">
          <div className={`${outline} w-[163px] pl-[19px] gap-[16px]`}><SelectIcon />Select</div>
          <div className={`${outline} w-[140px] ml-[16px] pl-[17px] gap-[17px]`}><Plus className="w-[26px] h-[26px]" strokeWidth={2} />New</div>
          <div className={`${outline} w-[151px] ml-[17px] pl-[15px] gap-[15px]`}><Folder className="w-[30px] h-[30px]" strokeWidth={1.8} />Open</div>
        </div>
      </div>

      {/* Analyze */}
      <div className={`${sect} pt-[45px] pb-[49px]`}>
        <div className={head}>
          <Search className="w-[30px] h-[30px] -ml-[1px] shrink-0" strokeWidth={2} />
          <span className="ml-[17px]">Analyze</span>
          <div className="ml-auto" />
          <PaneChev />
        </div>
        <div className="mt-[29px] h-[36px] flex items-center text-[24px] text-[#4b5563]">
          Drilldown on a value
          <Help cls="ml-[4px]" />
        </div>
        <div className="mt-[19px] h-[28px] flex items-center text-[24px] text-[#4b5563]">
          <div className="w-[55px] h-[28px] rounded-full bg-[#e5e7eb] flex items-center pl-[29px]">
            <div className="w-[20px] h-[20px] rounded-full bg-white" />
          </div>
          <span className="ml-[17px]">Exclude zero rows from results</span>
        </div>
        <div className={`${pale} mt-[23px] h-[60px] w-[160px]`}>Drilldown</div>
        <div className="mt-[33px] h-[36px] flex items-center text-[24px] text-[#4b5563]">Check your table for unrecognized dimensions</div>
        <div className={`${pale} mt-[17px] h-[61px] w-[142px]`}>Validate</div>
      </div>

      {/* Publish */}
      <div className={`${sect} pt-[46px] pb-[48px]`}>
        <div className={head}>
          <ArrowUpToLine className="w-[28px] h-[28px] shrink-0" strokeWidth={2} />
          <span className="ml-[18px]">Publish</span>
          <Help cls="ml-[7px]" />
          <div className="ml-auto" />
          <PaneChev />
        </div>
        <div className="mt-[35px] h-[58px] flex text-[28px] font-medium w-[636px] -mr-[10px]">
          <div className="w-[318px] border-b-[4px] border-[#2f62d6] text-[#374151] flex items-center justify-center">Data</div>
          <div className="w-[318px] border-b-2 border-[#f0f1f3] text-[#9ca3af] flex items-center justify-center font-normal">Template</div>
        </div>
        <div className="mt-[32px] w-[240px] h-[62px] rounded-[6px] bg-[#8aabf8] flex items-center pl-[18px] gap-[11px] text-[28px] font-medium text-white">
          <svg width="26" height="30" viewBox="0 0 26 30" className="shrink-0">
            <path d="M2 16 L5 13 V21 L2 19Z M7 11 L10 8 V20 L7 22Z M11 6 L14 4 V18 L11 20Z M1 22 L8 19 L17 24 L9 29Z" fill="#fff" />
            <path d="M22 29V4 M18 8 L22 3 L26 8" stroke="#fff" strokeWidth="2" fill="none" />
          </svg>
          Publish Data
        </div>
      </div>

      {/* Tables */}
      <div className={`${sect} pt-[47px] pb-[61px]`}>
        <div className={head}>
          <svg width="28" height="26" viewBox="0 0 28 26" className="shrink-0">
            <rect x="0" y="0" width="28" height="26" rx="3" fill="#374151" />
            <rect x="3.5" y="8" width="9" height="6" fill="#fff" /><rect x="15.5" y="8" width="9" height="6" fill="#fff" />
            <rect x="3.5" y="16.5" width="9" height="6" fill="#fff" /><rect x="15.5" y="16.5" width="9" height="6" fill="#fff" />
          </svg>
          <span className="ml-[18px]">Tables</span>
          <div className="ml-auto w-[119px] h-[48px] rounded-full bg-[#e9cd4a] flex items-center pl-[16px] gap-[7px] text-[22px] font-normal text-[#1f2937]">
            <Star className="w-[20px] h-[20px]" fill="#1f2937" strokeWidth={0} />
            New!
          </div>
          <PaneChev />
        </div>
        <div className="mt-[29px] text-[24px] leading-[36px] text-[#4b5563] w-[570px]">Create dynamic tables for non-numeric data and attributes.</div>
        <div className="mt-[28px] h-[40px] flex items-center pl-[17px] gap-[10px] text-[28px] font-medium text-[#3767d6]">
          <SelectIcon />
          Create Table from Range
        </div>
        <div className="mt-[24px] h-[40px] flex items-center pl-[14px] gap-[7px] text-[28px] font-medium text-[#3767d6]">
          <File className="w-[30px] h-[30px]" strokeWidth={2} />
          Open Existing Table
        </div>
      </div>
    </div>
  );
}

function StatusBar() {
  return (
    <div className="h-[38px] shrink-0 border-t-2 border-[#a8a8a8] bg-[#e2e2e2] flex items-center text-[24px] text-[#666]">
      <div className="w-[1030px] shrink-0 flex items-center mt-[3px]">
        <span className="ml-[40px] w-[110px]">Ready</span>
        <svg width="30" height="30" viewBox="0 0 30 30" fill="none" stroke="#666" strokeWidth="1.5" className="shrink-0">
          <circle cx="15" cy="4" r="3" />
          <path d="M2 7 L12 11 H18 L28 7 M12 11 V20 L9 29 M18 11 V18 M16 24 L20 29 L27 20" />
        </svg>
        <span className="ml-[7px] whitespace-nowrap">Accessibility: Good to go</span>
      </div>
      <div className="w-[1370px] h-full shrink-0 bg-gradient-to-b from-[#e2e2e2] to-[#bcbcbc] [mask-image:linear-gradient(90deg,transparent,#000_5%,#000_95%,transparent)]" />
      <div className="ml-auto w-[75px] h-full bg-[#a8a8a8] flex items-center justify-center shrink-0">
        <svg width="28" height="30" viewBox="0 0 28 30">
          <rect x="0" y="0" width="28" height="30" fill="#fff" />
          <path d="M9.5 2V28M18.5 2V28M2 10.5H26M2 19.5H26" stroke="#a8a8a8" strokeWidth="2" />
          <rect x="2" y="2" width="24" height="26" fill="none" stroke="#a8a8a8" strokeWidth="1" />
        </svg>
      </div>
      <svg width="28" height="30" viewBox="0 0 28 30" fill="none" stroke="#666" strokeWidth="2" className="ml-[21px] shrink-0">
        <rect x="1" y="1" width="26" height="28" /><rect x="6" y="6" width="16" height="18" strokeWidth="1.5" />
        <path d="M9 11H19M9 15H19M9 19H19" strokeWidth="1.5" />
      </svg>
      <svg width="28" height="30" viewBox="0 0 28 30" fill="none" stroke="#666" strokeWidth="2" className="ml-[43px] shrink-0">
        <rect x="1" y="1" width="26" height="28" /><path d="M10 1V17H18V1M1 17H27" strokeWidth="2" />
      </svg>
      <div className="ml-[37px] w-[17px] h-[5px] bg-[#666] shrink-0" />
      <div className="ml-[14px] w-[200px] h-[10px] rounded-full bg-[#a0a0a0] relative shrink-0">
        <div className="absolute left-[90px] -top-[13px] w-[31px] h-[36px] rounded-full bg-white" />
      </div>
      <svg width="16" height="16" viewBox="0 0 16 16" className="ml-[14px] shrink-0"><path d="M8 0V16M0 8H16" stroke="#666" strokeWidth="4" /></svg>
      <span className="ml-[34px] mr-[48px] text-[24px] font-light text-[#555]">120%</span>
    </div>
  );
}

export default function App() {
  return (
    <div className="w-[3448px] h-[2048px] overflow-hidden flex flex-col bg-[#f5f5f5] font-['Inter',sans-serif]">
      <TitleBar />
      <TabsRow />
      <Ribbon />
      <FormulaBar />
      <div className="h-[5px] shrink-0 border-t-2 border-b-2 border-[#c8c8c8] bg-[#f0f0f0]" />
      <div className="flex-1 min-h-0 flex">
        <div className="w-[2746px] shrink-0 flex flex-col min-h-0 overflow-hidden">
          <Sheet />
          <TabBar />
        </div>
        <Pane />
      </div>
      <StatusBar />
    </div>
  );
}
